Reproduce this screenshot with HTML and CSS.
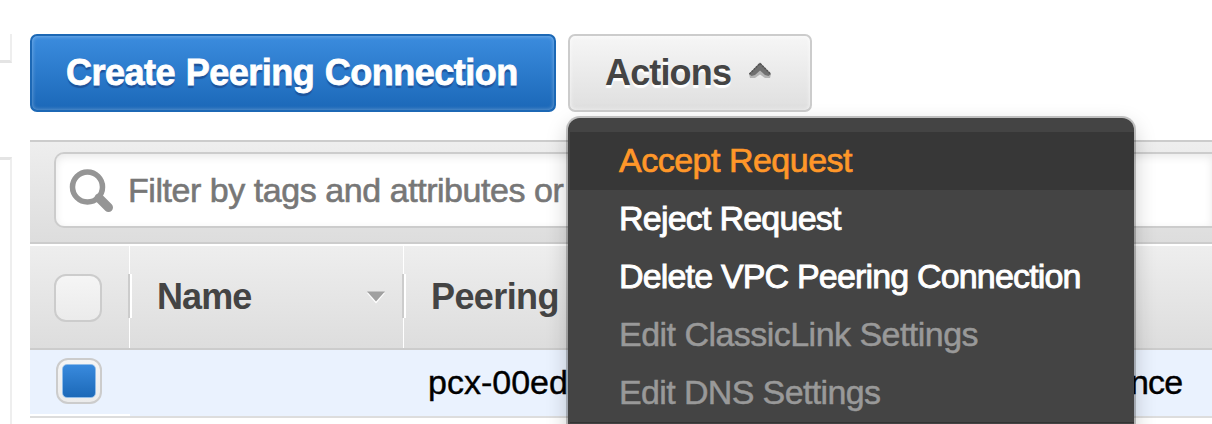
FILE: index.html
```html
<!DOCTYPE html>
<html lang="en">
<head>
<meta charset="utf-8">
<title>Peering Connections</title>
<link rel="stylesheet" href="styles.css">
</head>
<body>
<div class="app">
  <aside class="sidebar">
    <div class="panel panel-top"></div>
    <div class="panel panel-nav"></div>
  </aside>
  <main class="content">
    <div class="toolbar">
      <button class="btn btn-primary"><span class="create-label">Create Peering Connection</span></button>
      <div class="actions">
        <button class="btn btn-default"><span class="actions-label">Actions</span>
          <svg class="chevron" width="24" height="18" viewBox="0 0 24 18"><path d="M1 13 L12 2 L23 13 L22 17 H17 L12 13.500 L7 17 H2Z" fill="#b4b4b4"/><path d="M1 13 L12 1.500 L23 13 L20.500 15 L17 14 L12 9.500 L7 14 L3.500 15Z" fill="#707070"/><path d="M1.500 13 L12 2.500 L22.500 13" fill="none" stroke="#555" stroke-width="1.500" stroke-dasharray="2 1"/></svg>
        </button>
        <ul class="menu">
          <li class="item active"><span class="t-accept">Accept Request</span></li>
          <li class="item"><span class="t-reject">Reject Request</span></li>
          <li class="item"><span class="t-delete">Delete VPC Peering Connection</span></li>
          <li class="item disabled"><span class="t-classic">Edit ClassicLink Settings</span></li>
          <li class="item disabled"><span class="t-dns">Edit DNS Settings</span></li>
        </ul>
      </div>
    </div>
    <div class="filter-bar">
      <div class="search">
        <svg class="glass" width="46" height="46" viewBox="0 0 46 46" fill="none" stroke="#959595"><circle cx="18.500" cy="18" r="15" stroke-width="5.500"/><path d="M30 29 L39.500 38.500" stroke-width="9" stroke-linecap="round"/></svg>
        <span class="placeholder">Filter by tags and attributes or</span>
      </div>
    </div>
    <div class="thead">
      <div class="th th-check"><span class="check"></span></div>
      <div class="th th-name"><span class="name-label">Name</span>
        <svg class="caret" width="20" height="13" viewBox="0 0 20 13"><path d="M1 2 H19 L10 12.500Z" fill="#fff"/><path d="M1 0.500 H19 L10 10.500Z" fill="#a0a0a0"/></svg>
      </div>
      <div class="th th-peering"><span class="peering-label">Peering</span></div>
    </div>
    <div class="row">
      <div class="td-check"><span class="check checked"><span class="fill"></span></span></div>
      <div class="td-name"></div>
      <div class="td-id"><span class="id-label">pcx-00ed</span></div>
      <div class="td-tail"><span class="tail-label">nce</span></div>
    </div>
  </main>
</div>
</body>
</html>
```
FILE: styles.css
```css
* { box-sizing: border-box; }
body {
  margin: 0;
  background: #fff;
  font-family: "Liberation Sans", Arial, sans-serif;
  overflow: hidden;
}
.app { display: flex; width: 1212px; height: 424px; overflow: hidden; }
.sidebar { width: 12px; margin-right: 18px; padding-top: 34px; flex: none; }
.panel { border-right: 2px solid #eee; }
.panel-top { height: 29px; border-bottom: 3px solid #e4e4e4; margin-bottom: 94px; }
.panel-nav { height: 300px; border-top: 3px solid #e4e4e4; }
.content { flex: 1; min-width: 0; padding-top: 34px; }
.toolbar { display: flex; gap: 12px; height: 78px; margin-bottom: 28px; }
.actions { position: relative; width: 244px; }
.btn {
  display: flex;
  align-items: center;
  height: 78px;
  margin: 0;
  padding: 0 0 1px 35px;
  border-radius: 7px;
  font: bold 36px/40px "Liberation Sans", Arial, sans-serif;
  white-space: nowrap;
}
.btn-primary {
  width: 526px;
  padding-left: 34px;
  color: #fff;
  border: 2px solid #1c68b5;
  background: linear-gradient(#3b8cde, #1b68b8);
  box-shadow: inset 0 0 4px rgba(255, 255, 255, .4);
  text-shadow: 0 3px 1px #1d549c;
  -webkit-text-stroke: .8px #fff;
}
.btn-default {
  width: 244px;
  color: #444;
  border: 2px solid #ccc;
  background: linear-gradient(#f6f6f6, #dfdfdf);
  box-shadow: inset 0 0 4px rgba(255, 255, 255, .8);
  text-shadow: 0 3px 1px #fff;
}
.chevron { margin: -6px 0 0 17px; }
.menu {
  position: absolute;
  z-index: 2;
  top: 84px;
  left: 0;
  width: 566px;
  height: 320px;
  margin: 0;
  padding: 14px 0 0;
  list-style: none;
  background: #444;
  border-radius: 12px 12px 0 0;
  box-shadow: 0 0 0 2px rgba(0, 0, 0, .22), 0 8px 22px rgba(0, 0, 0, .22);
}
.item {
  height: 58px;
  margin-left: 2px;
  padding-left: 49px;
  font-size: 34px;
  line-height: 56px;
  color: #fff;
  white-space: nowrap;
  -webkit-text-stroke: .9px currentColor;
}
.active { color: #ff9729; background: #373737; -webkit-text-stroke-width: .7px; }
.disabled { color: #999; -webkit-text-stroke-width: .5px; }
.item:last-child { height: 59px; border-bottom: 1px solid #333; }
.filter-bar {
  height: 104px;
  padding: 10px 0 0 24px;
  border-top: 2px solid #ccc;
  border-bottom: 2px solid #ccc;
  background: linear-gradient(#eee, #ddd);
}
.search {
  display: flex;
  align-items: center;
  height: 76px;
  padding-left: 13px;
  border: 2px solid #ccc;
  border-right: 0;
  border-radius: 10px 0 0 10px;
  background: #fff;
  box-shadow: inset 0 3px 8px rgba(0, 0, 0, .09);
}
.glass { flex: none; margin-top: 4px; }
.placeholder {
  margin-left: 13px;
  font-size: 34px;
  color: #777;
  letter-spacing: -.45px;
  -webkit-text-stroke: .6px currentColor;
}
.thead {
  display: flex;
  height: 106px;
  border-top: 2px solid #fff;
  border-bottom: 2px solid #ccc;
  background: linear-gradient(#eee, #ddd);
  font-size: 36px;
  font-weight: bold;
  color: #444;
}
.th { display: flex; position: relative; align-items: center; height: 102px; }
.th-check { width: 100px; padding: 2px 0 0 24px; }
.th-name { width: 274px; padding: 0 17px 0 27px; justify-content: space-between; }
.th-peering { padding: 0 0 0 27px; }
.th-check, .th-name { border-right: 1px solid #fff; }
.th-check::after, .th-name::after {
  content: "";
  position: absolute;
  top: 28px;
  right: -3px;
  width: 4px;
  height: 44px;
  background: linear-gradient(90deg, #ccc 50%, #fff 50%);
}
.check {
  display: block;
  width: 48px;
  height: 48px;
  border: 2px solid #ccc;
  border-radius: 12px;
  background: linear-gradient(#f5f5f5, #ebebeb);
}
.checked { width: 46px; height: 46px; padding: 4px; }
.fill {
  display: block;
  width: 34px;
  height: 34px;
  border: 1px solid #90bce8;
  border-radius: 5px;
  background: linear-gradient(#398add, #1c69b8);
}
.row {
  display: flex;
  height: 68px;
  background: #eaf2fe;
  border-bottom: 2px solid #ddd;
  font-size: 34px;
  line-height: 64px;
  color: #000;
}
.td-check { width: 100px; padding: 8px 0 0 26px; border-bottom: 2px solid #fff; }
.td-name { width: 274px; }
.td-id { width: 726px; padding-left: 24px; -webkit-text-stroke: .4px #000; }
.td-tail { letter-spacing: -.8px; -webkit-text-stroke: .4px #000; }
.create-label { letter-spacing: -.49px; word-spacing: 1px; }
.actions-label { letter-spacing: -.85px; }
.t-accept { letter-spacing: -.5px; }
.t-reject { letter-spacing: -.77px; }
.t-delete { letter-spacing: -.83px; }
.t-classic { letter-spacing: -.53px; }
.t-dns { letter-spacing: -.63px; }
.name-label { letter-spacing: -.9px; }
.peering-label { letter-spacing: -.6px; }
.create-label, .actions-label, .item span, .placeholder, .name-label, .peering-label, .id-label, .tail-label { display: inline-block; white-space: nowrap; }
```
